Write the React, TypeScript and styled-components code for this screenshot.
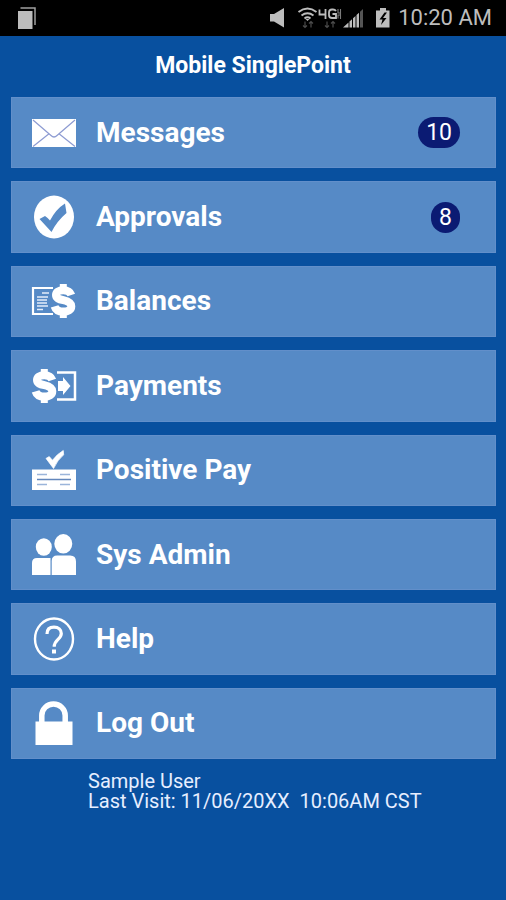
import React from 'react';
import styled, { createGlobalStyle } from 'styled-components';

const GlobalStyle = createGlobalStyle`
  * { box-sizing: border-box; }
  html { background: #08509f; }
  body { margin: 0; font-family: Roboto, "Liberation Sans", sans-serif; color: #fff; }
`;

const StatusBar = styled.div`
  display: flex;
  align-items: center;
  justify-content: space-between;
  height: 36px;
  padding: 0 14px 0 18px;
  background: #000;
  color: #bdbdbd;
`;

const StatusGroup = styled.div`
  display: flex;
  align-items: center;
  svg { display: block; }
`;

const Clock = styled.time`
  margin-left: 8px;
  font-size: 22px;
  line-height: 38px;
  white-space: nowrap;
`;

const Title = styled.h1`
  margin: 0;
  padding: 16px 0 17px;
  font-size: 23px;
  line-height: 28px;
  font-weight: 700;
  text-align: center;
`;

const Menu = styled.nav`
  display: grid;
  grid-auto-rows: 1fr;
  gap: 13px;
  min-height: 662px;
  padding: 0 10px 0 11px;
`;

const MenuButton = styled.button`
  display: flex;
  align-items: center;
  gap: 20px;
  width: 100%;
  padding: 0 35px 0 20px;
  border: 1px solid #628fca;
  border-radius: 0;
  background: #568ac6;
  color: #fff;
  font: inherit;
  text-align: left;
  cursor: pointer;
`;

const MenuIcon = styled.svg`
  flex: none;
  width: 44px;
  height: 44px;
  overflow: visible;
`;

const MenuLabel = styled.span`
  flex: 1;
  font-size: 28px;
  line-height: 36px;
  font-weight: 700;
`;

const Badge = styled.span`
  min-width: 29px;
  padding: 0 8px;
  border-radius: 16px;
  background: #0b1b73;
  font-size: 23px;
  line-height: 31px;
  text-align: center;
`;

const Visit = styled.footer`
  padding: 12px 16px 16px 88px;
  font-size: 20px;
  line-height: 20px;
  color: #e6eeff;
`;

const VisitText = styled.p`
  margin: 0;
  white-space: pre-wrap;
`;

const BLUE = '#568ac6';
const CHECK = 'M0 11 L4.5 8.5 L9 13.5 Q16 4.5 24 0 L24.5 6 Q16 13 10.5 25 Z';

const Dollar = ({ x }: { x: number }) => (
  <g transform={`translate(${x} 5)`}>
    <path
      d="M20.3 11 C19 7.2 16 6.2 12.2 6.2 C7.7 6.2 5 8 5 11 C5 14.3 8 15.2 12.3 16.200 C17 17.300 20.300 18.500 20.300 22.300 C20.300 26 17 27.600 12.300 27.600 C8 27.600 4.800 26.300 3.600 22.300"
      fill="none"
      stroke="#fff"
      strokeWidth="8"
    />
    <path d="M8.800 0h7v5h-7z M8.800 28h7v6h-7z" fill="#fff" />
  </g>
);

const icons = {
  messages: (
    <>
      <path d="M0 8h44v28H0z" fill="#fff" />
      <path d="M1 9 L19 24.500 Q22 27.500 25 24.500 L43 9 M1 35.500 L17 22.700 M43 35.500 L27 22.700" fill="none" stroke="#8d9bd2" strokeWidth="1.200" />
    </>
  ),
  approvals: (
    <>
      <ellipse cx="22" cy="22" rx="20" ry="21.500" fill="#fff" />
      <path d="M7.500 24 L13 21 Q16 23 18 25.500 Q24 14 33 8.500 L34.500 18 Q25 26 19.500 37 Z" fill={BLUE} />
    </>
  ),
  balances: (
    <>
      <path d="M21 9H1v26h20" fill="none" stroke="#fff" strokeWidth="2.200" />
      <path d="M10 14h7M5 18h11M5 21h10M5 24h10M5 27h11M5 30.500h6" stroke="#e3edfa" strokeWidth="1.600" />
      <Dollar x={19} />
    </>
  ),
  payments: (
    <>
      <Dollar x={0} />
      <path d="M25 8.500h18v27H25" fill="none" stroke="#fff" strokeWidth="2.500" />
      <path d="M26 17h5V13l7.500 9-7.500 9v-4h-5z" fill="#fff" />
    </>
  ),
  positive: (
    <>
      <path d={CHECK} transform="translate(14 2.500) scale(.72)" fill="#fff" stroke="#fff" />
      <path d="M0 21.500h44V42H0z" fill="#fff" />
      <path d="M5 26.500h10M28 26.500h10M5 36.500h10M28 36.500h10" stroke="#9bb5da" strokeWidth="1.500" />
      <path d="M5 31.500h34" stroke="#6387bc" strokeWidth="1.300" />
    </>
  ),
  admin: (
    <g fill="#fff">
      <ellipse cx="11.800" cy="14" rx="8" ry="8.700" />
      <ellipse cx="31.300" cy="10.800" rx="9" ry="9.700" />
      <path d="M0 42V30q0-5 5-5h13.500v17z" />
      <path d="M19.700 42V28q0-5.500 5.500-5.500h13q5.800 0 5.800 6V42z" />
    </g>
  ),
  help: (
    <>
      <ellipse cx="22" cy="22" rx="19" ry="20.500" fill="none" stroke="#fff" strokeWidth="2.400" />
      <path d="M15 17 C15 12 18 10.200 22 10.200 C26.500 10.200 29.300 13 29.300 16.500 C29.300 22.500 22.200 22.500 22.200 29.800" fill="none" stroke="#fff" strokeWidth="3.200" />
      <path d="M20 32.500h4v4h-4z" fill="#fff" />
    </>
  ),
  logout: (
    <>
      <path d="M9.800 22V14.500a11.700 11.500 0 0 1 23.400 0V22" fill="none" stroke="#fff" strokeWidth="5.500" />
      <path d="M3.500 20.500h37V44h-37z" fill="#fff" />
    </>
  ),
};

type Item = { icon: keyof typeof icons; label: string; count?: number };

const items: Item[] = [
  { icon: 'messages', label: 'Messages', count: 10 },
  { icon: 'approvals', label: 'Approvals', count: 8 },
  { icon: 'balances', label: 'Balances' },
  { icon: 'payments', label: 'Payments' },
  { icon: 'positive', label: 'Positive Pay' },
  { icon: 'admin', label: 'Sys Admin' },
  { icon: 'help', label: 'Help' },
  { icon: 'logout', label: 'Log Out' },
];

const PagesIcon = () => (
  <svg width="18" height="24" viewBox="0 0 18 24" aria-hidden="true">
    <path d="M2.500 2H17v17" fill="none" stroke="#a0a0a0" strokeWidth="1.500" />
    <path d="M0 5h14.500v18H0z" fill="#bdbdbd" />
  </svg>
);

const arrowsPath = 'M2 1v6M0 5l2 2 2-2M8 7V1M6 3l2-2 2 2';

const SystemIcons = () => (
  <svg width="120" height="36" viewBox="271 0 120 36" fill="#bdbdbd" aria-hidden="true">
    <path d="M271 14h4l10-6v19.500l-10-6h-4z" />
    <g fill="none" stroke="#bdbdbd" strokeWidth="1.900">
      <path d="M299.500 12q9-7 18 0M302.500 15.500q6-4.500 12 0M305.500 18.500q3-2.300 6 0" />
    </g>
    <path d="M306.500 19l2 2 2-2z" />
    <g fill="none" stroke="#4c4c4c" strokeWidth="1.200">
      <path d={arrowsPath} transform="translate(304 20.500)" />
      <path d={arrowsPath} transform="translate(326 20.500)" />
    </g>
    <g fill="none" stroke="#bdbdbd" strokeWidth="1.800">
      <path d="M320.500 9.500v5h6M326.500 9v10M337 11q-1-1.500-3-1.500h-1q-3 0-3 3v2.500q0 3 3 3h4v-4h-3.500" />
      <path d="M339 9v4h3M339 18.500v-3.500h3M341.500 9v10" strokeWidth="1.100" opacity=".65" />
    </g>
    <path d="M344 27.500l5.500-5v5z M350.500 21.500l2.500-2.300v8.300h-2.500z M354 18.200l2.500-2.300v11.600H354z M357.500 15l2.500-2.300v14.800h-2.500z" />
    <path d="M361 11.700l3-2.700v18.500h-3z" fill="#555" />
    <path d="M377 10.500h4V8h6v2.500h3.500v17H377z" />
    <path d="M385.500 12.500l-5 7h3l-1.500 5.500 5.500-7h-3.500l4-5.500z" fill="#000" />
  </svg>
);

export default function App() {
  return (
    <>
      <GlobalStyle />
      <StatusBar>
        <StatusGroup><PagesIcon /></StatusGroup>
        <StatusGroup>
          <SystemIcons />
          <Clock>10:20 AM</Clock>
        </StatusGroup>
      </StatusBar>
      <main>
        <Title>Mobile SinglePoint</Title>
        <Menu aria-label="Main menu">
          {items.map(({ icon, label, count }) => (
            <MenuButton key={label} type="button">
              <MenuIcon viewBox="0 0 44 44" aria-hidden="true">{icons[icon]}</MenuIcon>
              <MenuLabel>{label}</MenuLabel>
              {count !== undefined && <Badge>{count}</Badge>}
            </MenuButton>
          ))}
        </Menu>
      </main>
      <Visit>
        <VisitText>{'Sample User\nLast Visit: 11/06/20XX  10:06AM CST'}</VisitText>
      </Visit>
    </>
  );
}
